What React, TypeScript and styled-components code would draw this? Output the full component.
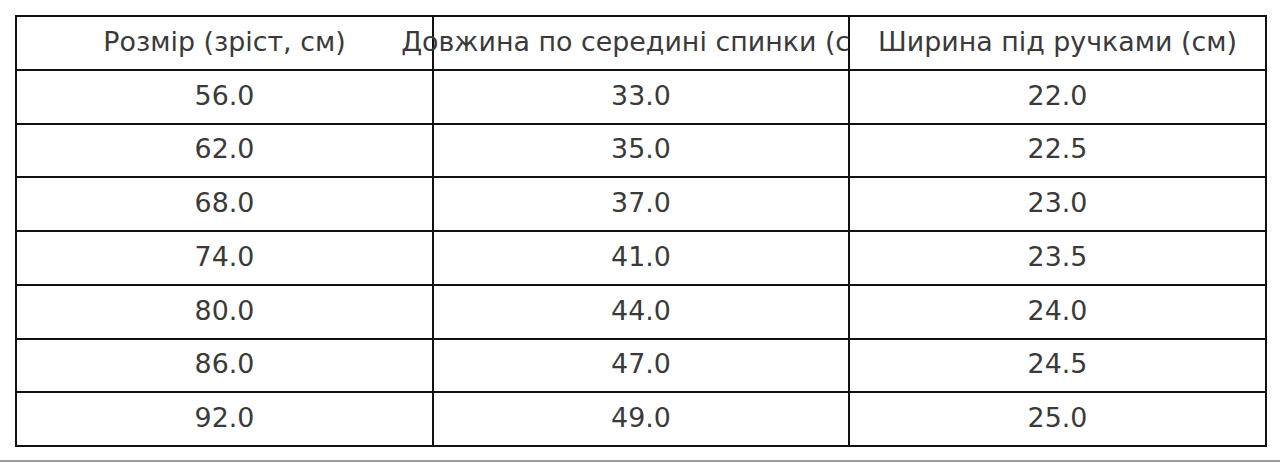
import React from 'react';
import styled, { createGlobalStyle } from 'styled-components';

const GlobalStyle = createGlobalStyle`
  html, body {
    margin: 0;
    padding: 0;
    background: #fff;
  }
`;

const Page = styled.div`
  box-sizing: border-box;
  width: 1280px;
  height: 462px;
  padding: 15px 14px 0 15px;
  border-bottom: 2px solid #9c9c9c;
  background: #fff;
  font-family: 'DejaVu Sans', 'Noto Sans', sans-serif;
`;

const Grid = styled.div`
  display: grid;
  grid-template-columns: 417px 416px 417px;
  grid-template-rows: repeat(8, 53.75px);
  width: 1252px;
  border-top: 2px solid #111;
  border-left: 2px solid #111;
  box-sizing: border-box;
`;

const Cell = styled.div`
  position: relative;
  display: flex;
  align-items: center;
  justify-content: center;
  padding-bottom: 3px;
  box-sizing: border-box;
  background: #fff;
  border-right: 2px solid #111;
  border-bottom: 2px solid #111;
  color: #3a3a3a;
  font-size: 26.85px;
  white-space: nowrap;
  overflow: visible;
  min-width: 0;
`;

const headers = ['Розмір (зріст, см)', 'Довжина по середині спинки (см)', 'Ширина під ручками (см)'];

const rows: [string, string, string][] = [
  ['56.0', '33.0', '22.0'],
  ['62.0', '35.0', '22.5'],
  ['68.0', '37.0', '23.0'],
  ['74.0', '41.0', '23.5'],
  ['80.0', '44.0', '24.0'],
  ['86.0', '47.0', '24.5'],
  ['92.0', '49.0', '25.0']
];

export default function App () {
  return (
    <>
      <GlobalStyle />
      <Page>
        <Grid>
          {headers.map((h) => (
            <Cell key={h}>{h}</Cell>
          ))}
          {rows.map((r, i) => r.map((v, j) => (
            <Cell key={`${i}-${j}`}>{v}</Cell>
          )))}
        </Grid>
      </Page>
    </>
  );
}
